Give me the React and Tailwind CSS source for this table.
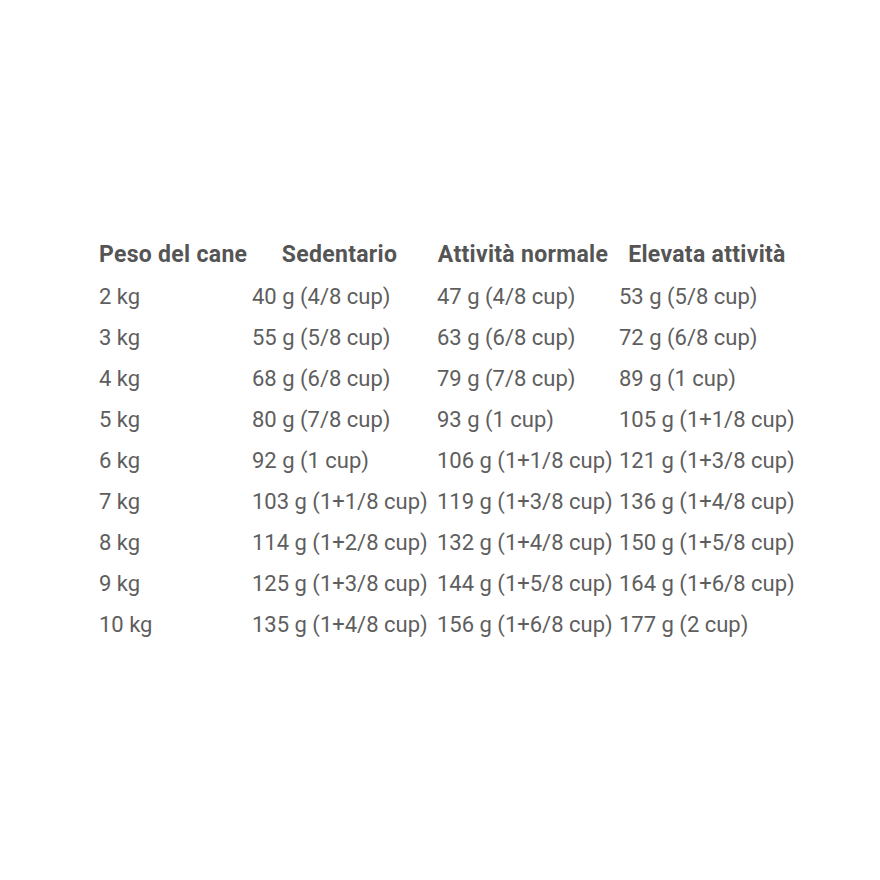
const rows = [
  ['2 kg', '40 g (4/8 cup)', '47 g (4/8 cup)', '53 g (5/8 cup)'],
  ['3 kg', '55 g (5/8 cup)', '63 g (6/8 cup)', '72 g (6/8 cup)'],
  ['4 kg', '68 g (6/8 cup)', '79 g (7/8 cup)', '89 g (1 cup)'],
  ['5 kg', '80 g (7/8 cup)', '93 g (1 cup)', '105 g (1+1/8 cup)'],
  ['6 kg', '92 g (1 cup)', '106 g (1+1/8 cup)', '121 g (1+3/8 cup)'],
  ['7 kg', '103 g (1+1/8 cup)', '119 g (1+3/8 cup)', '136 g (1+4/8 cup)'],
  ['8 kg', '114 g (1+2/8 cup)', '132 g (1+4/8 cup)', '150 g (1+5/8 cup)'],
  ['9 kg', '125 g (1+3/8 cup)', '144 g (1+5/8 cup)', '164 g (1+6/8 cup)'],
  ['10 kg', '135 g (1+4/8 cup)', '156 g (1+6/8 cup)', '177 g (2 cup)'],
]

// header cells sit a little left of the column centre in the original
const headers = [
  ['Peso del cane', 'justify-start'],
  ['Sedentario', 'justify-center pr-[10px]'],
  ['Attività normale', 'justify-center pr-[10px]'],
  ['Elevata attività', 'justify-center pr-[4px]'],
]

export default function App() {
  return (
    <div className="w-[880px] h-[880px] bg-white pt-[234px] pl-[99px] text-[#5e5e5e]" style={{ fontFamily: 'Roboto, "Liberation Sans", sans-serif' }}>
      <div className="grid grid-cols-[153px_185px_182px_180px] text-[22px]">
        {headers.map(([h, cls]) => (
          <div key={h} className={`h-[42px] flex items-center font-bold text-[23px] tracking-[0.3px] text-[#555] whitespace-nowrap ${cls}`}>
            {h}
          </div>
        ))}
        {rows.map((r) =>
          r.map((c, j) => (
            <div key={r[0] + j} className="h-[41px] flex items-center whitespace-nowrap">
              {c}
            </div>
          ))
        )}
      </div>
    </div>
  )
}
